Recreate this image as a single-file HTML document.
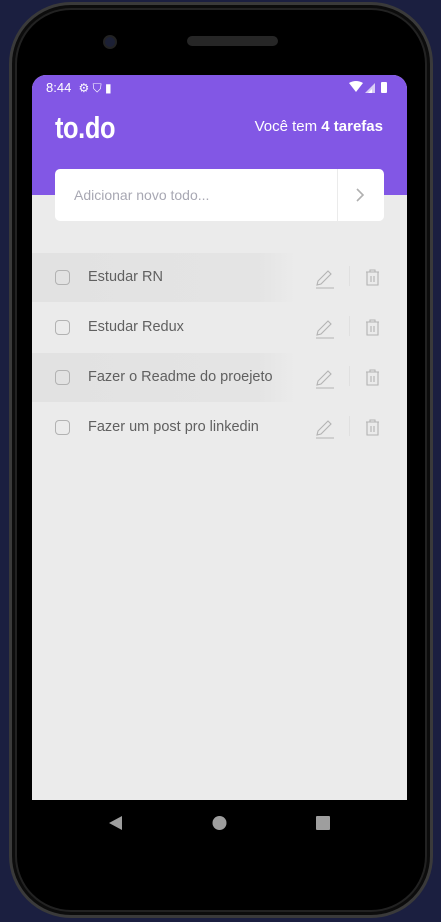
<!DOCTYPE html>
<html><head><style>
*{margin:0;padding:0;box-sizing:border-box}
body{width:441px;height:922px;background:#1b1f40;position:relative;overflow:hidden;font-family:"Liberation Sans",sans-serif}
.phone{position:absolute;left:9px;top:2px;width:424px;height:916px;background:#000;border-radius:62px;border:3px solid #3a3a3a;box-shadow:inset 0 0 0 3px #0c0c0c,inset 0 0 0 5px #222}
.cam{position:absolute;left:91px;top:30px;width:14px;height:14px;border-radius:50%;background:#1c2035;border:2px solid #222}
.spk{position:absolute;left:175px;top:31px;width:91px;height:10px;border-radius:5px;background:#262626}
.screen{position:absolute;left:32px;top:75px;width:375px;height:725px;background:#ebebeb;border-radius:14px 14px 0 0;overflow:hidden}
.hdr{position:absolute;left:0;top:0;width:375px;height:120px;background:#8257e5}
.status{position:absolute;left:14px;top:5px;color:#fff;font-size:13px}
.logo{position:absolute;left:23px;top:35px;color:#fff;font-size:31px;font-weight:bold;letter-spacing:-0.5px;transform:scaleX(0.82);transform-origin:left}
.count{position:absolute;right:24px;top:43px;color:#fff;font-size:15px}
.input{position:absolute;left:23px;top:94px;width:329px;height:52px;background:#fff;border-radius:5px}
.input span{position:absolute;left:19px;top:18px;color:#a8a8b3;font-size:14px}
.input .div{position:absolute;left:282px;top:0;width:1px;height:52px;background:#ebebeb}
.row{position:absolute;left:0;width:375px;height:49px}
.row.hl{background:linear-gradient(90deg,#e2e2e2 0,#e4e4e4 60%,#ebebeb 70%)}
.cb{position:absolute;left:23px;top:17px;width:15px;height:15px;border:1px solid #b2b2b2;border-radius:4px}
.txt{position:absolute;left:56px;top:16px;color:#606060;font-size:14.5px}
</style></head><body>
<div class="phone"><div class="cam"></div><div class="spk"></div></div>
<div class="screen">
<div class="hdr">
<div class="status">8:44 &nbsp;<span style="font-size:12px">⚙ ⛉ ▮</span></div>
<svg style="position:absolute;right:10px;top:6px" width="48" height="13"><path d="M0 2 Q7 -2 14 2 L7 11Z" fill="#fff"/><path d="M16 12 L26 2 L26 12Z" fill="#d8ccf6"/><path d="M19 12 L23 8 L23 12Z" fill="#fff"/><rect x="32" y="1" width="6" height="11" rx="1" fill="#fff"/></svg>
<div class="logo">to.do</div>
<div class="count">Você tem <b>4 tarefas</b></div>
</div>
<div class="input"><span>Adicionar novo todo...</span><div class="div"></div>
<svg style="position:absolute;left:300px;top:19px" width="10" height="14"><path d="M2 1 L8 7 L2 13" stroke="#b0b0b0" stroke-width="1.6" fill="none"/></svg></div>

<div class="row hl" style="top:178px"><div class="cb"></div><div class="txt">Estudar RN</div></div>
<div class="row" style="top:228px"><div class="cb"></div><div class="txt">Estudar Redux</div></div>
<div class="row hl" style="top:278px"><div class="cb"></div><div class="txt">Fazer o Readme do proejeto</div></div>
<div class="row" style="top:328px"><div class="cb"></div><div class="txt">Fazer um post pro linkedin</div></div>
</div>
<svg style="position:absolute;left:0;top:0" width="441" height="922">
<g stroke="#b3b3b3" stroke-width="1.1" fill="none">
<g id="ic"><path d="M318 281 L328 271 L331 274 L321 284 L317 285Z"/><path d="M316 288 H334"/><path d="M366 272 H379 M370 272 V270 H375 V272 M367 272 V285 H378 V272 M371 276 V282 M374 276 V282"/></g>
<use href="#ic" y="50"/><use href="#ic" y="100"/><use href="#ic" y="150"/>
</g>
<g fill="#e0e0e0"><rect x="349" y="266" width="1" height="20"/><rect x="349" y="316" width="1" height="20"/><rect x="349" y="366" width="1" height="20"/><rect x="349" y="416" width="1" height="20"/></g>
<path d="M109 823 L122 816 V830Z" fill="#9e9e9e"/>
<circle cx="219.5" cy="823" r="7" fill="#9e9e9e"/>
<rect x="316" y="816" width="14" height="14" rx="1" fill="#9e9e9e"/>
</svg>
</body></html>
